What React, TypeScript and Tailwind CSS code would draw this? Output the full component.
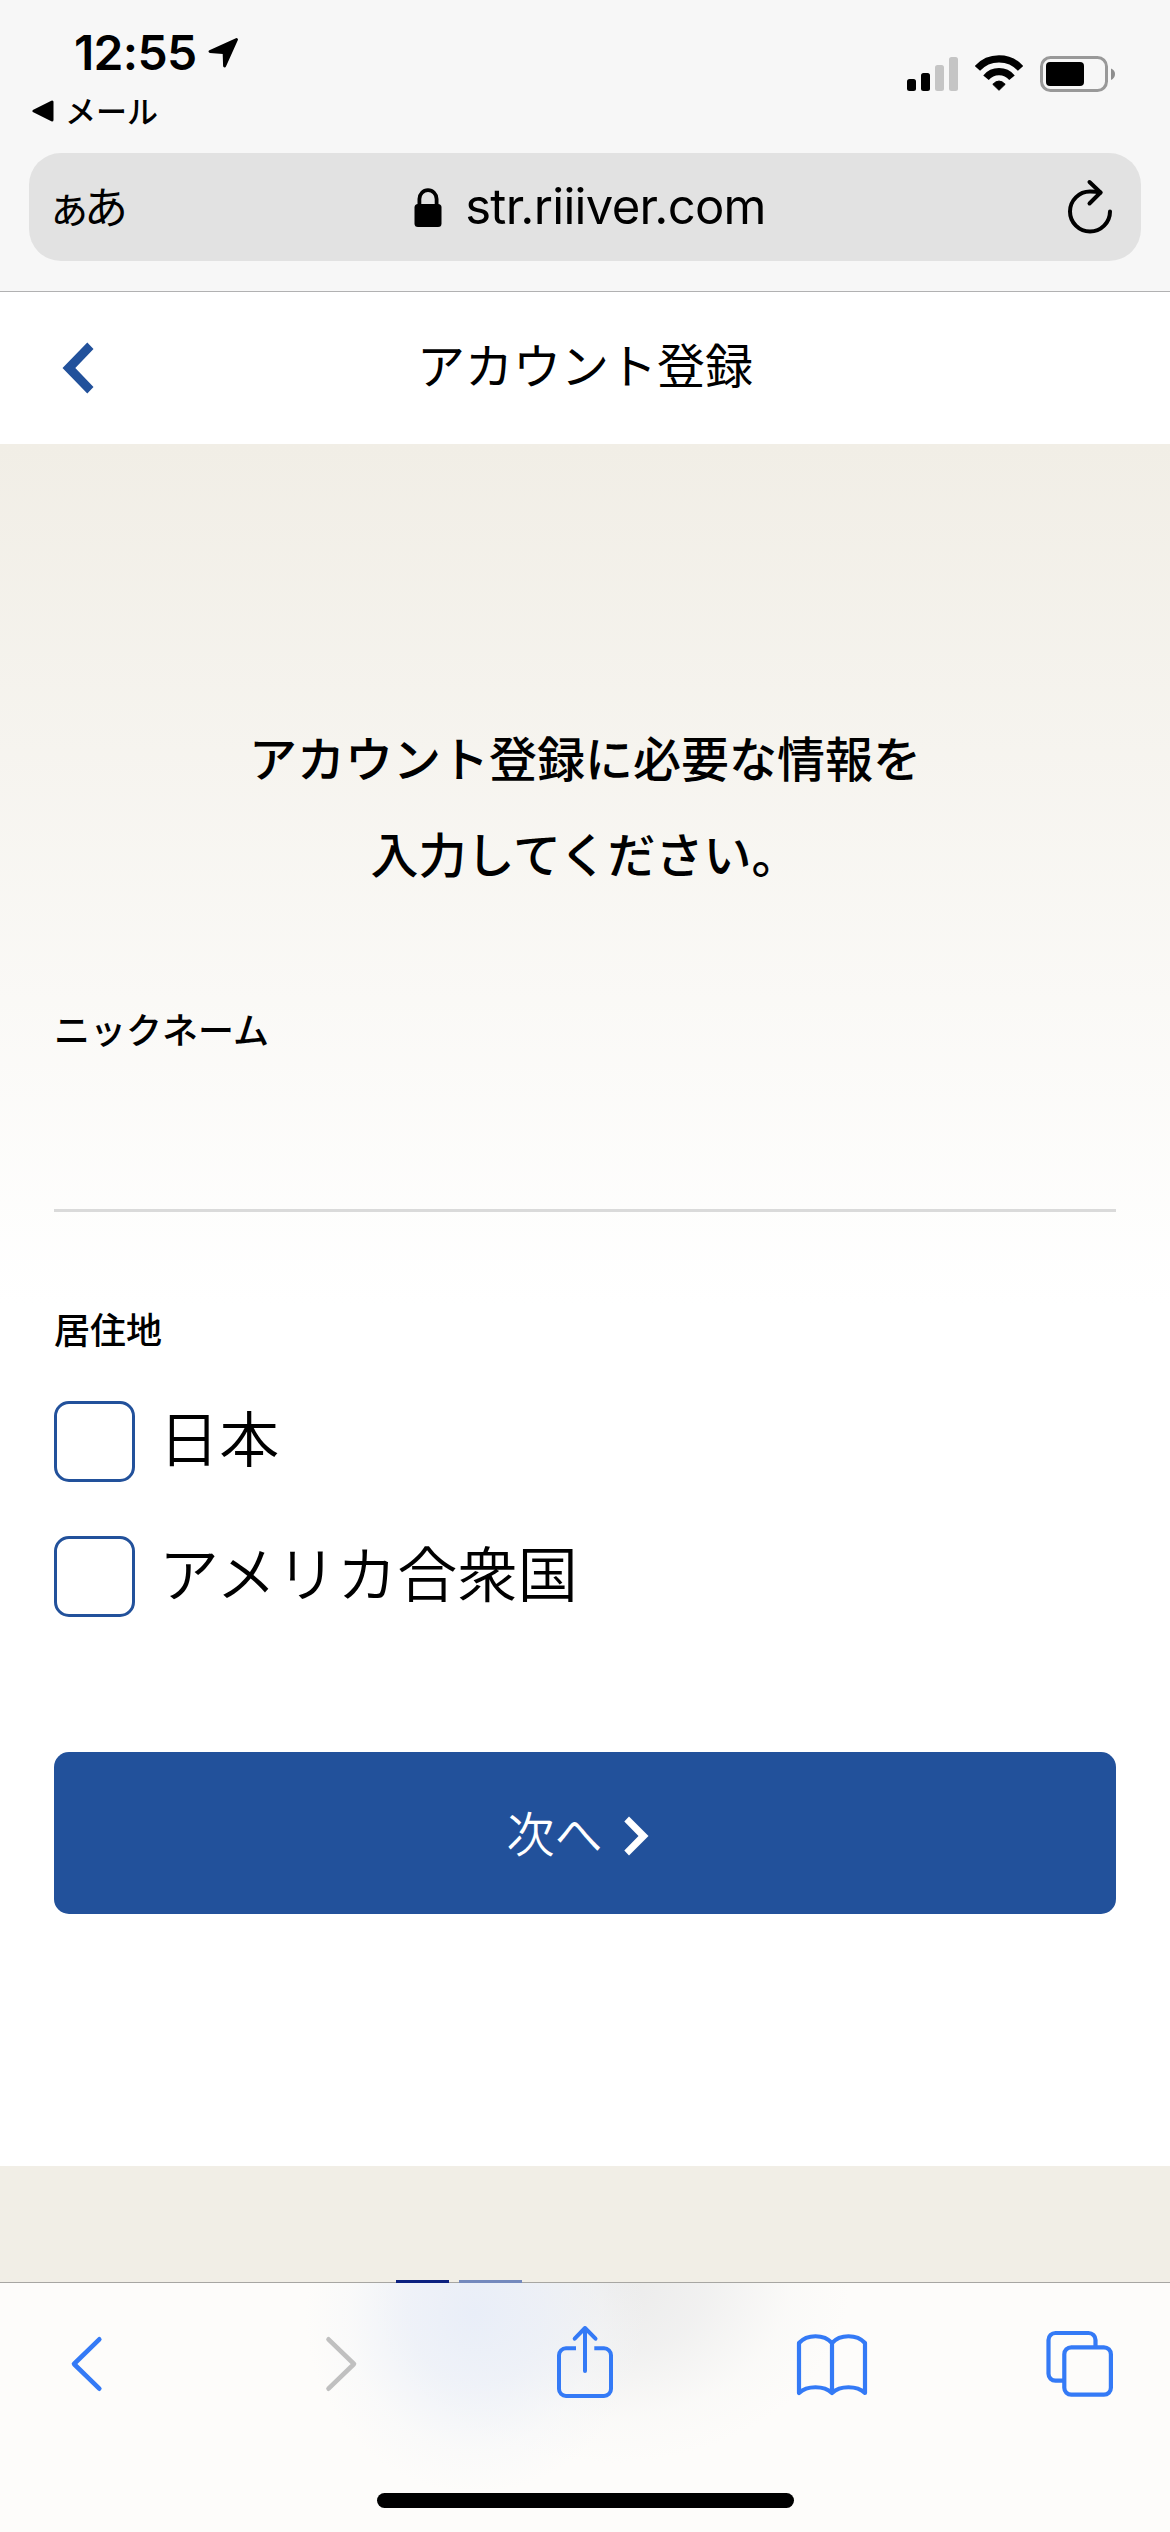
import React, { useState } from 'react';

interface Country {
  id: string;
  label: string;
}

const countries: Country[] = [
  { id: 'jp', label: '日本' },
  { id: 'us', label: 'アメリカ合衆国' },
];

const StatusBar = () => (
  <div className="flex h-[153px] justify-between">
    <div className="pt-[25px] pl-[32px]">
      <div className="flex h-[56px] items-center pl-[42px]">
        <span className="w-[134px] font-['Inter',sans-serif] text-[48px] leading-[56px] font-semibold tracking-[-0.7px]">12:55</span>
        <svg className="-mt-[1px] h-[32px] w-[31px]" viewBox="0 0 31 32">
          <path d="M28.5 2.5 L2 14.5 L15 15.5 Q16.2 15.6 16.2 17 L16.6 29 Z" fill="black" stroke="black" strokeWidth="3" strokeLinejoin="round" />
        </svg>
      </div>
      <div className="flex h-[44px] items-center pt-[16px]">
        <svg className="h-[22px] w-[22px]" viewBox="0 0 22 22">
          <path d="M2 11 L20 2 V20 Z" fill="black" stroke="black" strokeWidth="3" strokeLinejoin="round" />
        </svg>
        <span className="-mt-[3px] ml-[11px] text-[31px] leading-[40px] font-medium">メール</span>
      </div>
    </div>
    <div className="flex items-start pt-[55px] pr-[54px]">
      <svg className="mt-[2px] h-[34px] w-[51px]" viewBox="0 0 51 34">
        <rect x="0" y="22" width="9" height="12" rx="2.5" />
        <rect x="14" y="16" width="9" height="18" rx="2.5" />
        <rect x="28" y="8" width="9" height="26" rx="2.5" fill="#c5c5c5" />
        <rect x="42" y="0" width="9" height="34" rx="2.5" fill="#c5c5c5" />
      </svg>
      <svg className="ml-[17px] h-[37px] w-[48px]" viewBox="0 0 48 37" fill="none" stroke="black" strokeWidth="7.2">
        <path d="M2.4 13.4 A29.2 29.2 0 0 1 45.6 13.4" />
        <path d="M11 22.7 A17 17 0 0 1 37 22.7" />
        <path d="M24 35.3 L17.8 29.3 Q24 22.8 30.2 29.3 Z" fill="black" stroke="black" strokeWidth="1" strokeLinejoin="round" />
      </svg>
      <svg className="mt-[1px] ml-[17px] h-[36px] w-[76px]" viewBox="0 0 76 36">
        <rect x="1.5" y="1.5" width="65" height="33" rx="9" fill="none" stroke="#999999" strokeWidth="3" />
        <rect x="6" y="6" width="38" height="24" rx="4" />
        <path d="M71 12.5 Q75 14 75 18 Q75 22 71 24 Z" fill="#8e8e8e" />
      </svg>
    </div>
  </div>
);

const AddressBar = () => (
  <div className="mx-[29px] flex h-[108px] items-center justify-between rounded-[32px] bg-[#e2e2e2] pr-[25px] pl-[18px]">
    <span className="-mt-[5px] w-[86px] text-[44px] leading-[60px] tracking-[-7px] whitespace-nowrap">ぁあ</span>
    <div className="mr-[17px] flex items-center">
      <svg className="h-[39px] w-[28px]" viewBox="0 0 28 39">
        <rect x="0.5" y="16" width="27" height="23" rx="3.5" />
        <path d="M5.4 18 V11 A8.6 8.8 0 0 1 22.6 11 V18" fill="none" stroke="black" strokeWidth="3.8" />
      </svg>
      <span className="ml-[23px] font-['Inter',sans-serif] text-[49px] leading-[60px] tracking-[-0.7px]">str.riiiver.com</span>
    </div>
    <svg className="-mt-[1px] h-[60px] w-[52px]" viewBox="0 0 52 60" fill="none" stroke="black" strokeWidth="4" strokeLinecap="round" strokeLinejoin="round">
      <path d="M46 34.5 A20 20 0 1 1 26 14.5 Q32 14.5 36.5 15.5" />
      <path d="M25.5 5 L36.5 15.5 L25.5 26.5" />
    </svg>
  </div>
);

const Toolbar = () => (
  <div className="h-[250px] border-t border-[#a7a6a2] bg-[#fdfcfa] bg-[radial-gradient(ellipse_170px_180px_at_475px_30px,#e9eef8_0%,#ecf0f8cc_40%,#f4f6f966_75%,transparent_100%),radial-gradient(ellipse_240px_180px_at_610px_0px,#ebebeb_0%,#eeeeeecc_40%,#f6f6f566_75%,transparent_100%)]">
    <div className="flex justify-between px-[45px] pt-[37px]">
      <svg className="h-[80px] w-[80px]" viewBox="0 0 80 80" fill="none" stroke="#347af6" strokeWidth="4.6" strokeLinecap="round" strokeLinejoin="round">
        <path d="M54.3 19.3 L29 44 L54.3 68.7" />
      </svg>
      <svg className="h-[80px] w-[80px]" viewBox="0 0 80 80" fill="none" stroke="#c0c0c0" strokeWidth="4.6" strokeLinecap="round" strokeLinejoin="round">
        <path d="M33.5 19.3 L59 44 L33.5 68.7" />
      </svg>
      <svg className="h-[80px] w-[80px]" viewBox="0 0 80 80" fill="none" stroke="#347af6" strokeWidth="4" strokeLinejoin="round">
        <path d="M31 28.3 H21 A7 7 0 0 0 14 35.3 V69 A7 7 0 0 0 21 76 H59 A7 7 0 0 0 66 69 V35.3 A7 7 0 0 0 59 28.3 H49.3" />
        <path d="M40 8 V51 M29.7 18.7 L40 8 L50.5 18.7" strokeLinecap="round" />
      </svg>
      <svg className="h-[80px] w-[80px]" viewBox="0 0 80 80" fill="none" stroke="#347af6" strokeWidth="4.2" strokeLinejoin="round">
        <path d="M4 23 C12 14 29 14 37 23 C45 14 62 14 70 23 V73 C62 65.3 45 65.3 37 73 C29 65.3 12 65.3 4 73 Z M37 23 V73" />
      </svg>
      <svg className="h-[80px] w-[80px]" viewBox="0 0 80 80" fill="none" stroke="#347af6" strokeWidth="4.2">
        <path d="M19 60.7 H10.5 A7 7 0 0 1 3.5 53.7 V20 A7 7 0 0 1 10.5 13 H43.5 A7 7 0 0 1 50.5 20 V27" />
        <rect x="19.3" y="27.3" width="46.6" height="47.4" rx="7" />
      </svg>
    </div>
    {/* home indicator */}
    <div className="mx-auto mt-[93px] h-[15px] w-[417px] rounded-full bg-black" />
  </div>
);

const App = () => {
  const [nickname, setNickname] = useState('');
  const [selected, setSelected] = useState<string | null>(null);

  return (
    <div className="flex h-[2532px] w-[1170px] flex-col overflow-hidden bg-white font-['Noto_Sans_CJK_JP',sans-serif] text-black">
      <div className="h-[292px] border-b border-[#b1b1b2] bg-[#f7f7f7]">
        <StatusBar />
        <AddressBar />
      </div>

      <header className="flex h-[152px] items-center justify-between px-[62px]">
        <svg className="h-[52px] w-[32px]" viewBox="0 0 32 52">
          <path d="M25.3 0.5 L31.5 7 L13.3 26 L31.5 45 L25.3 51.5 L0.5 26 Z" fill="#22519b" />
        </svg>
        <h1 className="-mt-[10px] text-[48px] leading-[72px]">アカウント登録</h1>
        <div className="w-[32px]" />
      </header>

      <main className="h-[1722px] bg-linear-to-b from-[#f1eee6] to-white to-50% px-[54px] pt-[264px]">
        <h2 className="text-center text-[48px] leading-[96px] font-medium">
          アカウント登録に必要な情報を
          <br />
          入力してください。
        </h2>

        <label htmlFor="nickname" className="mt-[101px] block text-[36px] leading-[54px] font-medium">ニックネーム</label>
        <input
          id="nickname"
          type="text"
          value={nickname}
          onChange={(e) => setNickname(e.target.value)}
          className="block h-[157px] w-full border-b-[3px] border-[#dadada] text-[48px] outline-none"
        />

        <p className="mt-[89px] text-[36px] leading-[54px] font-medium">居住地</p>
        <div className="mt-[46px] flex flex-col gap-[54px]">
          {countries.map((country) => (
            <label key={country.id} className="flex h-[81px] items-center">
              <input
                type="checkbox"
                checked={selected === country.id}
                onChange={() => setSelected(country.id)}
                className="h-[81px] w-[81px] appearance-none rounded-[15px] border-[3px] border-[#22519b] bg-white checked:bg-[#22519b]"
              />
              <span className="-mt-[12px] ml-[24px] text-[60px] leading-[81px] font-[350] tracking-[0.3px]">{country.label}</span>
            </label>
          ))}
        </div>

        <button className="mt-[135px] flex h-[162px] w-full items-center justify-center rounded-[15px] bg-[#22519b] pr-[15px] text-white">
          <span className="-mt-[4px] text-[48px] leading-[72px] font-[350]">次へ</span>
          <svg className="mt-[5px] ml-[21px] h-[40px] w-[25px]" viewBox="0 0 25 40">
            <path d="M5 0.5 L24.5 20 L5 39.5 L0.3 34.5 L14.5 20 L0.3 5.5 Z" fill="white" />
          </svg>
        </button>
      </main>

      {/* top edge of the footer logo, cut off by the toolbar */}
      <footer className="relative z-10 flex h-[116px] items-end pl-[396px] bg-[#f1eee6]">
        <div className="-mb-px h-[3px] w-[53px] bg-[#0c2180]" />
        <div className="-mb-px ml-[10px] h-[3px] w-[63px] bg-[#7489bd]" />
      </footer>
      <Toolbar />
    </div>
  );
};

export default App;
